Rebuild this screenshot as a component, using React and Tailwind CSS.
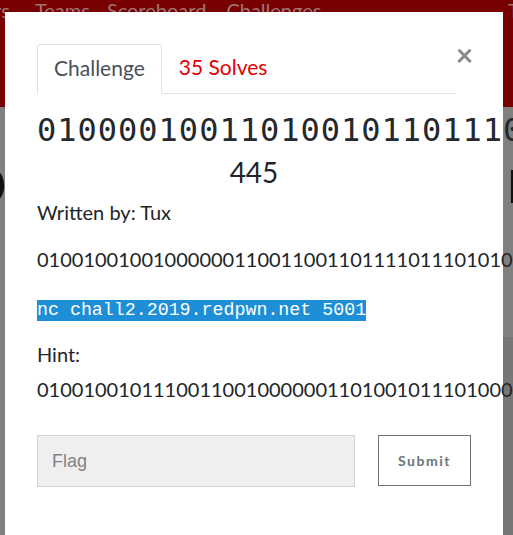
import React from "react";

const TITLE = "0100001001101001011011100110000101110010011110010101111100110001";
const DESC = "01001001001000000110011001101111011101010110111001100100001000000111010001101000011010010111001100100001";
const HINT = "0100100101110011001000000110100101110100001000000111001001100001011011100110010001101111011011010011111100100001";

export default function App() {
  return (
    <div className="relative w-[513px] h-[535px] overflow-hidden bg-[#808080] font-['Lato','Noto_Sans',sans-serif]">
      {/* page behind overlay */}
      <div className="h-[110px] bg-[#780000] flex items-start text-[20px] leading-[26px] text-[#a07575] -mt-[3px]">
        <span className="ml-[-6px]">rs</span>
        <span className="ml-[25px]">Teams</span>
        <span className="ml-[17px]">Scoreboard</span>
        <span className="ml-[20px]">Challenges</span>
        <span className="ml-auto mr-[-15px]">Te</span>
      </div>
      <div className="flex justify-between text-[64px] leading-[80px] font-bold text-[#101010] mt-[32px]">
        <span className="ml-[-30px]">p</span>
        <span className="mr-[-30px]">n</span>
      </div>
      <div className="absolute right-0 top-[337px] w-[10px] h-[198px] bg-[#777777]" />

      {/* modal */}
      <div className="absolute left-[5px] top-[12px] w-[498px] h-[560px] bg-white px-[32px] pt-[32px] text-[#212529]">
        <div className="flex items-start">
          <div className="flex flex-1 border-b border-[#dee2e6] text-[21px] leading-[30px]">
            <div className="border border-[#dee2e6] border-b-white rounded-t-[4px] px-[16px] pt-[8px] pb-[10px] mb-[-1px] text-[#495057]">
              Challenge
            </div>
            <div className="px-[17px] pt-[8px] pb-[10px] text-[#e50000]">35 Solves</div>
          </div>
          <div className="ml-[2px] w-[13px] text-[30px] leading-[24px] font-bold text-[#888888] mt-[-2px] flex justify-center">
            ×
          </div>
        </div>

        <div className="mt-[16px] whitespace-nowrap font-['DejaVu_Sans_Mono',monospace] text-[32px] tracking-[1px] leading-[40px] text-[#25282c]">
          {TITLE}
        </div>
        <div className="text-center text-[28px] leading-[38px] mt-[3px]">445</div>

        <div className="mt-[7px] text-[20px] leading-[28px]">Written by: Tux</div>
        <div className="mt-[19px] text-[20px] leading-[28px] whitespace-nowrap">{DESC}</div>

        <div className="mt-[25px] leading-[21px]">
          <span className="bg-[#1e8fd6] text-white font-['Liberation_Mono',monospace] text-[18.3px] leading-[21px] inline-block">
            nc chall2.2019.redpwn.net 5001
          </span>
        </div>

        <div className="mt-[19px] text-[20px] leading-[28px]">Hint:</div>
        <div className="mt-[7px] text-[20px] leading-[28px] whitespace-nowrap">{HINT}</div>

        <div className="mt-[32px] flex items-start gap-[23px]">
          <div className="w-[318px] h-[52px] bg-[#efefef] border border-[#ced4da] flex items-center px-[14px]">
            <span className="font-['Liberation_Sans',sans-serif] text-[18px] text-[#7d8288]">Flag</span>
          </div>
          <div className="w-[93px] h-[51px] border border-[#6c757d] flex items-center justify-center text-[14px] font-bold tracking-[1.5px] text-[#6c757d]">
            Submit
          </div>
        </div>
      </div>
    </div>
  );
}
